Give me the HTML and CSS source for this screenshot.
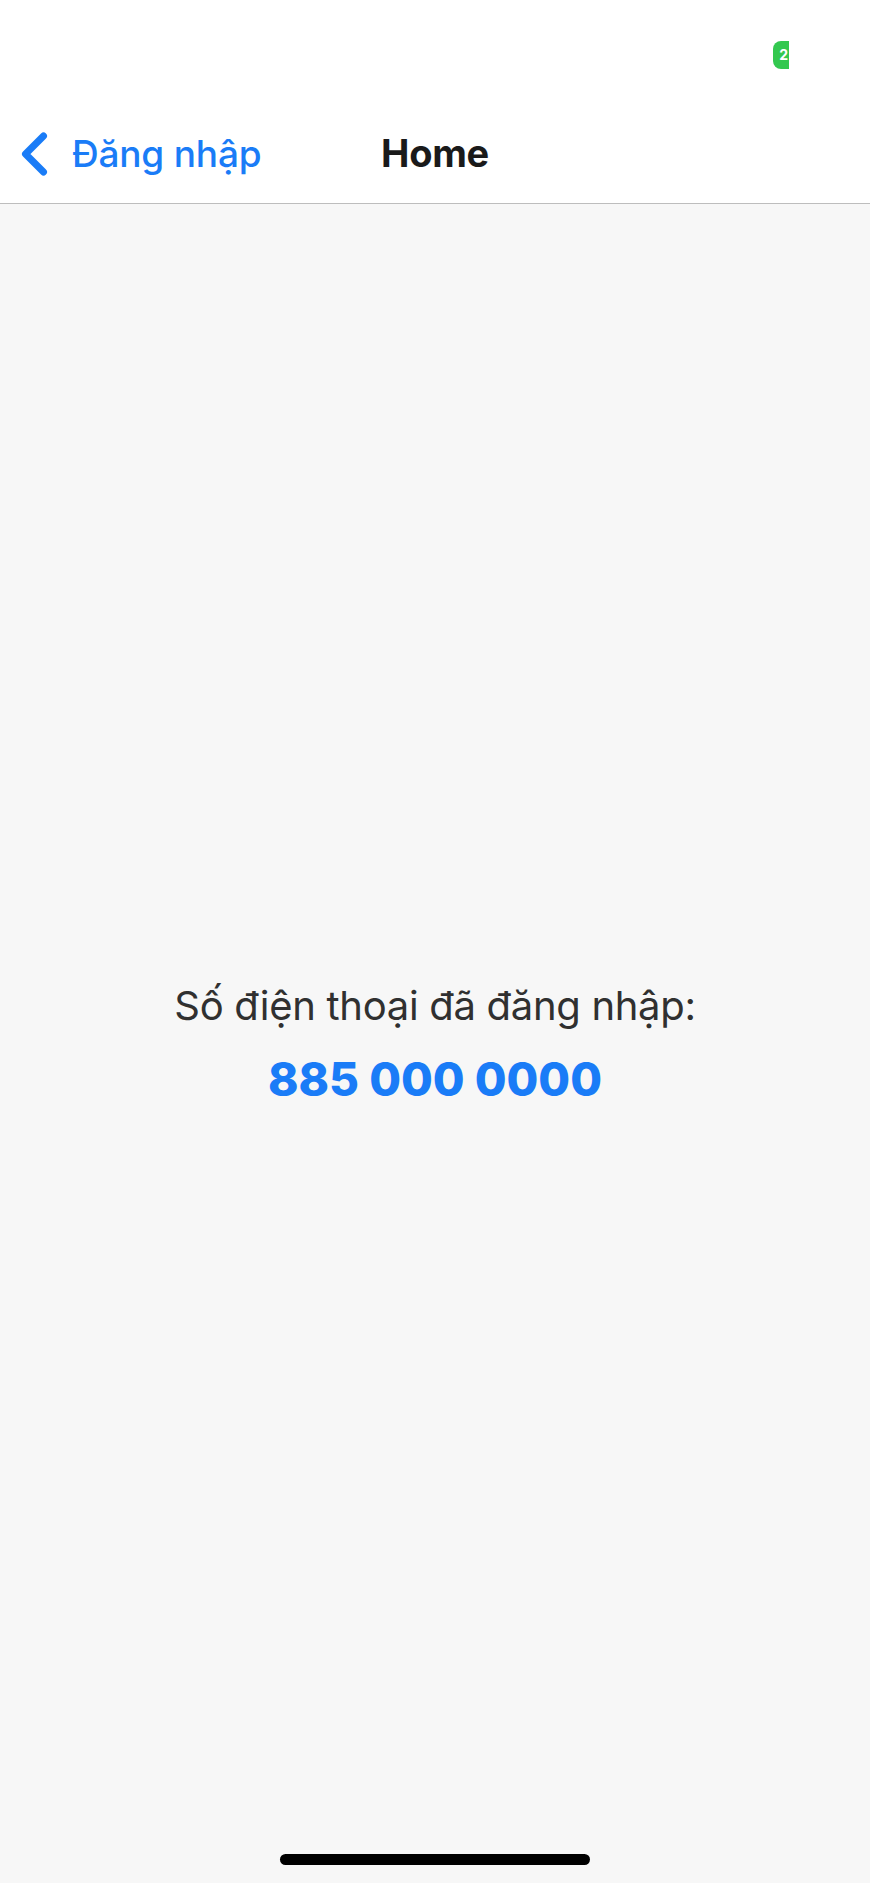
FILE: index.html
```html
<!DOCTYPE html>
<html lang="vi">
<head>
<meta charset="utf-8">
<title>Home</title>
<link rel="stylesheet" href="styles.css">
</head>
<body>
<div class="screen">
  <div class="status-bar">
    <span class="call-pill"><span class="call-text">2</span></span>
  </div>
  <header class="nav-bar">
    <a class="back" href="#">
      <svg class="chevron" viewBox="0 0 27 44" width="27" height="44" aria-hidden="true">
        <path d="M22.5 4 L4.5 22 L22.5 40" fill="none" stroke="#1a7cf7" stroke-width="7" stroke-linecap="round" stroke-linejoin="round"/>
      </svg>
      <span class="back-label">Đăng nhập</span>
    </a>
    <h1 class="title">Home</h1>
  </header>
  <main class="content">
    <p class="label">Số điện thoại đã đăng nhập:</p>
    <p class="phone">885 000 0000</p>
  </main>
  <div class="home-indicator"></div>
</div>
</body>
</html>
```

FILE: styles.css
```css
html, body {
  margin: 0;
  padding: 0;
}

body {
  font-family: Inter, "Noto Sans", "Liberation Sans", sans-serif;
  background: #f7f7f7;
}

.screen {
  position: relative;
  width: 870px;
  height: 1883px;
  display: flex;
  flex-direction: column;
  background: #f7f7f7;
  overflow: hidden;
}

.status-bar {
  height: 105px;
  flex-shrink: 0;
  background: #ffffff;
  display: flex;
  align-items: flex-start;
  padding-left: 773px;
  box-sizing: border-box;
}

.call-pill {
  margin-top: 41px;
  width: 16px;
  height: 28px;
  background: #33c84f;
  border-radius: 8px 0 0 8px;
  display: flex;
  align-items: center;
  justify-content: flex-end;
}

.call-text {
  color: #ffffff;
  font-weight: 700;
  font-size: 14px;
  line-height: 1;
  padding-right: 1px;
}

.nav-bar {
  height: 98px;
  flex-shrink: 0;
  background: #ffffff;
  border-bottom: 1px solid #bdbdbd;
  box-sizing: content-box;
  position: relative;
  display: flex;
  align-items: center;
  justify-content: center;
}

.back {
  position: absolute;
  left: 21px;
  top: 27px;
  display: flex;
  align-items: center;
  text-decoration: none;
  color: #1a7cf7;
}

.chevron {
  display: block;
  flex-shrink: 0;
}

.back-label {
  margin-left: 24px;
  font-size: 37px;
  font-weight: 450;
  letter-spacing: -0.2px;
  line-height: 44px;
  margin-top: -1px;
}

.title {
  margin: -2px 0 0 0;
  font-size: 38px;
  font-weight: 700;
  color: #1a1a1a;
  letter-spacing: -0.3px;
}

.content {
  flex: 1;
  display: flex;
  flex-direction: column;
  align-items: center;
  justify-content: center;
  padding-bottom: 2px;
}

.label {
  margin: 0;
  font-size: 40px;
  font-weight: 400;
  color: #303030;
  line-height: 48px;
  letter-spacing: -0.3px;
}

.phone {
  margin: 25px 0 0 0;
  font-size: 46px;
  font-weight: 800;
  color: #1a7cf7;
  line-height: 48px;
}

.home-indicator {
  position: absolute;
  left: 280px;
  bottom: 18px;
  width: 310px;
  height: 11px;
  border-radius: 6px;
  background: #000000;
}
```
